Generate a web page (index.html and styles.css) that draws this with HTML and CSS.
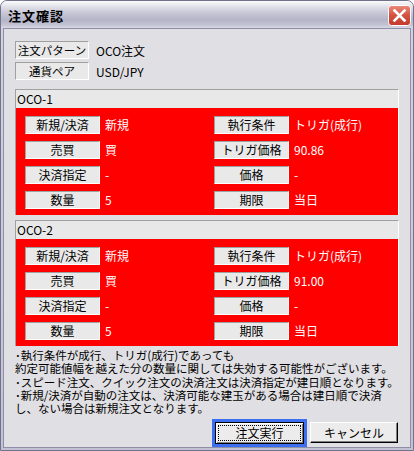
FILE: index.html
```html
<!DOCTYPE html>
<html lang="ja">
<head>
    <meta charset="UTF-8">
    <title>注文確認</title>
    <link rel="stylesheet" href="styles.css">
</head>
<body>
    <div class="window">
        <div class="titlebar">
            <span class="title">注文確認</span>
            <span class="close">
                <svg width="23" height="21" viewBox="0 0 23 21">
                    <defs>
                        <linearGradient id="cg" x1="0" y1="0" x2="0" y2="1">
                            <stop offset="0" stop-color="#e98b7c"/>
                            <stop offset="0.5" stop-color="#d4513f"/>
                            <stop offset="1" stop-color="#c23a2c"/>
                        </linearGradient>
                    </defs>
                    <rect x="0.5" y="0.5" width="22" height="20" rx="3" fill="url(#cg)" stroke="#fff"/>
                    <path d="M6.5 5.5 L16.5 15.5 M16.5 5.5 L6.5 15.5" stroke="#fff" stroke-width="2.6" stroke-linecap="square"/>
                </svg>
            </span>
        </div>

        <div class="client">
            <div class="info-row">
                <span class="label">注文パターン</span>
                <span class="info-value">OCO注文</span>
            </div>
            <div class="info-row">
                <span class="label">通貨ペア</span>
                <span class="info-value">USD/JPY</span>
            </div>

            <!-- OCO-1 -->
            <div class="group">
                <div class="group-head">OCO-1</div>
                <div class="group-body">
                    <span class="label">新規/決済</span><span class="value">新規</span>
                    <span class="label">執行条件</span><span class="value">トリガ(成行)</span>
                    <span class="label">売買</span><span class="value">買</span>
                    <span class="label">トリガ価格</span><span class="value">90.86</span>
                    <span class="label">決済指定</span><span class="value">-</span>
                    <span class="label">価格</span><span class="value">-</span>
                    <span class="label">数量</span><span class="value">5</span>
                    <span class="label">期限</span><span class="value">当日</span>
                </div>
            </div>

            <!-- OCO-2 -->
            <div class="group">
                <div class="group-head">OCO-2</div>
                <div class="group-body">
                    <span class="label">新規/決済</span><span class="value">新規</span>
                    <span class="label">執行条件</span><span class="value">トリガ(成行)</span>
                    <span class="label">売買</span><span class="value">買</span>
                    <span class="label">トリガ価格</span><span class="value">91.00</span>
                    <span class="label">決済指定</span><span class="value">-</span>
                    <span class="label">価格</span><span class="value">-</span>
                    <span class="label">数量</span><span class="value">5</span>
                    <span class="label">期限</span><span class="value">当日</span>
                </div>
            </div>

            <div class="notes">
                ･執行条件が成行、トリガ(成行)であっても<br>
                約定可能値幅を越えた分の数量に関しては失効する可能性がございます。<br>
                ･スピード注文、クイック注文の決済注文は決済指定が建日順となります。<br>
                ･新規/決済が自動の注文は、決済可能な建玉がある場合は建日順で決済<br>
                し、ない場合は新規注文となります。
            </div>

            <div class="buttons">
                <span class="default-ring"><button class="btn btn-default"><span class="focus">注文実行</span></button></span>
                <button class="btn">キャンセル</button>
            </div>
        </div>
    </div>
</body>
</html>
```

FILE: styles.css
```css
/* Base */
body {
    margin: 0;
    background-color: #ffffff;
    font-family: "Noto Sans CJK JP", "Liberation Sans", sans-serif;
    color: #000;
}

/* Window frame */
.window {
    width: 414px;
    height: 451px;
    box-sizing: border-box;
    border: 1px solid #72728c;
    border-radius: 7px 7px 0 0;
    background: linear-gradient(to bottom, #d3d3df, #c2c2d4);
    padding: 0 2px 2px 2px;
    display: flex;
    flex-direction: column;
    overflow: hidden;
}

/* Title bar */
.titlebar {
    height: 27px;
    margin: 0 -2px;
    padding: 0 2px 0 7px;
    display: flex;
    align-items: flex-start;
    justify-content: space-between;
    background: linear-gradient(to bottom, #fcfcfd 0%, #e4e4ec 18%, #c6c6d6 45%, #b5b5c9 70%, #c2c2d3 88%, #d9d9e4 100%);
}

.title {
    font-size: 13px;
    font-weight: bold;
    letter-spacing: 1px;
    line-height: 27px;
    margin-top: 1px;
}

.close {
    margin-top: 4px;
    width: 23px;
    height: 21px;
}

.close svg {
    display: block;
}

/* Client area */
.client {
    flex: 1;
    border: 1px solid #8e8ea6;
    background-color: #e0dfe3;
    padding: 12px 11px 0 11px;
    display: flex;
    flex-direction: column;
}

/* Sunken label boxes */
.label {
    box-sizing: border-box;
    height: 18px;
    background-color: #e9e9e9;
    border-top: 1px solid #a0a0a0;
    border-left: 1px solid #a0a0a0;
    border-right: 1px solid #ffffff;
    border-bottom: 1px solid #ffffff;
    font-size: 12px;
    line-height: 16px;
    text-align: center;
    white-space: nowrap;
}

.info-row {
    display: flex;
    align-items: center;
    height: 18px;
    margin-bottom: 3px;
}

.info-row .label {
    width: 74px;
    font-size: 11.5px;
}

.info-value {
    font-size: 12px;
    margin-left: 7px;
}

/* OCO groups */
.group {
    border-top: 1px solid #a0a0a0;
    border-left: 1px solid #a0a0a0;
    border-right: 1px solid #ffffff;
    margin-top: 5px;
}

.info-row + .group {
    margin-top: 6px;
}

.group-head {
    height: 18px;
    background-color: #e8e8e8;
    font-size: 12px;
    line-height: 18px;
    padding-left: 1px;
}

.group-body {
    background-color: #ff0000;
    padding: 8px 9px 6px 9px;
    display: grid;
    grid-template-columns: 75px 104px 75px 1fr;
    grid-auto-rows: 18px;
    column-gap: 5px;
    row-gap: 7px;
}

.group-body .value {
    color: #ffffff;
    font-size: 12px;
    line-height: 18px;
    white-space: nowrap;
}

/* Notes */
.notes {
    margin-top: 3px;
    font-size: 11.5px;
    line-height: 13.25px;
    white-space: nowrap;
}

/* Buttons */
.buttons {
    margin-top: auto;
    margin-bottom: 0;
    padding-right: 1px;
    height: 29px;
    display: flex;
    justify-content: flex-end;
    align-items: center;
    gap: 3px;
}

.btn {
    box-sizing: border-box;
    width: 88px;
    height: 21px;
    padding: 0;
    background-color: #ececec;
    font-family: "Noto Sans CJK JP", sans-serif;
    font-size: 12px;
    color: #000;
    border-top: 1px solid #ffffff;
    border-left: 1px solid #ffffff;
    border-right: 1px solid #000000;
    border-bottom: 1px solid #000000;
    box-shadow: inset -1px -1px 0 #808080;
}

.default-ring {
    display: block;
    border: 3px solid #3c6ef2;
}

.btn-default {
    display: block;
    width: 89px;
    height: 22px;
    border: 1px solid #000000;
    box-shadow: inset 1px 1px 0 #ffffff, inset -1px -1px 0 #808080;
    padding: 2px;
}

.focus {
    display: block;
    height: 100%;
    box-sizing: border-box;
    border: 1px dotted #000000;
    line-height: 14px;
}
```
